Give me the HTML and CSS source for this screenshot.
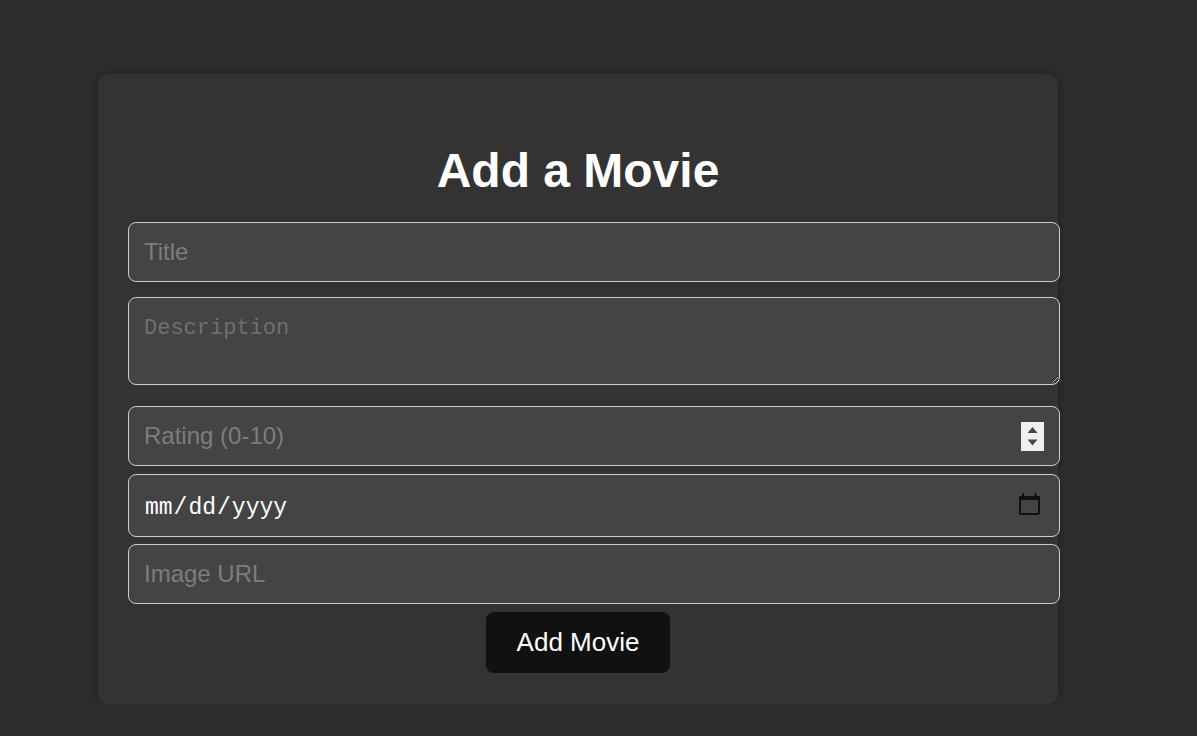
FILE: index.html
```html
<!DOCTYPE html>
<html lang="en">
<head>
<meta charset="utf-8">
<title>Add a Movie</title>
<link rel="stylesheet" href="styles.css">
</head>
<body>
<div class="container">
  <form class="card">
    <h1 class="heading">Add a Movie</h1>
    <input class="field field-title" type="text" placeholder="Title">
    <textarea class="field field-desc" placeholder="Description"></textarea>
    <div class="field-wrap wrap-rating">
      <input class="field field-rating" type="number" min="0" max="10" placeholder="Rating (0-10)">
      <span class="spinner" aria-hidden="true">
        <svg width="23" height="29" viewBox="0 0 23 29">
          <rect width="23" height="29" fill="#efefef"/>
          <path d="M6.5 11 L11.5 5 L16.5 11 Z" fill="#474747"/>
          <path d="M6.5 17.5 L11.5 23.5 L16.5 17.5 Z" fill="#474747"/>
        </svg>
      </span>
    </div>
    <div class="field-wrap wrap-date">
      <input class="field field-date" type="date">
      <span class="calendar" aria-hidden="true">
        <svg width="21" height="22" viewBox="0 0 21 22">
          <rect x="1" y="4" width="19" height="17" rx="1" fill="none" stroke="#111" stroke-width="2"/>
          <rect x="0" y="3" width="21" height="4" rx="1" fill="#111"/>
          <rect x="3" y="0" width="2" height="4" fill="#111"/>
          <rect x="15.5" y="0" width="2" height="4" fill="#111"/>
        </svg>
      </span>
    </div>
    <input class="field field-url" type="text" placeholder="Image URL">
    <button class="submit" type="button">Add Movie</button>
  </form>
</div>
</body>
</html>
```

FILE: styles.css
```css
html, body {
  margin: 0;
  padding: 0;
  background: #2d2d2d;
}

body {
  padding: 74px 0 0 98px;
  font-family: "Liberation Sans", Arial, sans-serif;
  color: #ffffff;
}

.container {
  width: 1000px;
}

.card {
  width: 900px;
  padding: 30px 30px 31px;
  background: #333333;
  border-radius: 10px;
  box-shadow: 0 0 12px rgba(0, 0, 0, 0.3);
  display: flex;
  flex-direction: column;
  align-items: flex-start;
}

.heading {
  align-self: stretch;
  text-align: center;
  font-size: 48px;
  line-height: 56px;
  font-weight: bold;
  margin: 39px 0 23px;
  color: #ffffff;
}

.field {
  display: block;
  box-sizing: content-box;
  width: 100%;
  height: 28px;
  padding: 15px;
  margin: 0;
  border: 1px solid #cccccc;
  border-radius: 8px;
  background: #444444;
  color: #ffffff;
  font-family: "Liberation Sans", Arial, sans-serif;
  font-size: 24px;
  line-height: 28px;
  outline: none;
}

.field::placeholder {
  color: #7d7d7d;
  opacity: 1;
}

.field-title {
  margin-bottom: 15px;
}

.field-desc {
  height: 56px;
  padding-top: 17px;
  padding-bottom: 13px;
  font-family: "Liberation Mono", "DejaVu Sans Mono", monospace;
  font-size: 22px;
  line-height: 28px;
  resize: vertical;
  margin-bottom: 21px;
}

.field-desc::placeholder {
  color: #707070;
}

.field-wrap {
  position: relative;
  width: 100%;
}

.wrap-rating {
  margin-bottom: 8px;
}

.wrap-date {
  margin-bottom: 7px;
}

.field-rating {
  -moz-appearance: textfield;
}

.field-rating::-webkit-inner-spin-button,
.field-rating::-webkit-outer-spin-button {
  -webkit-appearance: none;
  margin: 0;
}

.spinner {
  position: absolute;
  left: 893px;
  top: 16px;
  width: 23px;
  height: 29px;
  line-height: 0;
  pointer-events: none;
}

.field-date {
  height: 32px;
  padding-top: 17px;
  padding-bottom: 12px;
  line-height: 32px;
  font-family: "Liberation Mono", "DejaVu Sans Mono", monospace;
  font-size: 23px;
  color-scheme: light;
}

.field-date::-webkit-calendar-picker-indicator {
  opacity: 0;
}

.calendar {
  position: absolute;
  left: 891px;
  top: 19px;
  width: 21px;
  height: 22px;
  line-height: 0;
  pointer-events: none;
}

.field-url {
  margin-bottom: 8px;
}

.submit {
  align-self: center;
  height: 61px;
  padding: 0 31px;
  border: none;
  border-radius: 8px;
  background: #111111;
  color: #ffffff;
  font-family: "Liberation Sans", Arial, sans-serif;
  font-size: 26px;
  cursor: pointer;
}
```
